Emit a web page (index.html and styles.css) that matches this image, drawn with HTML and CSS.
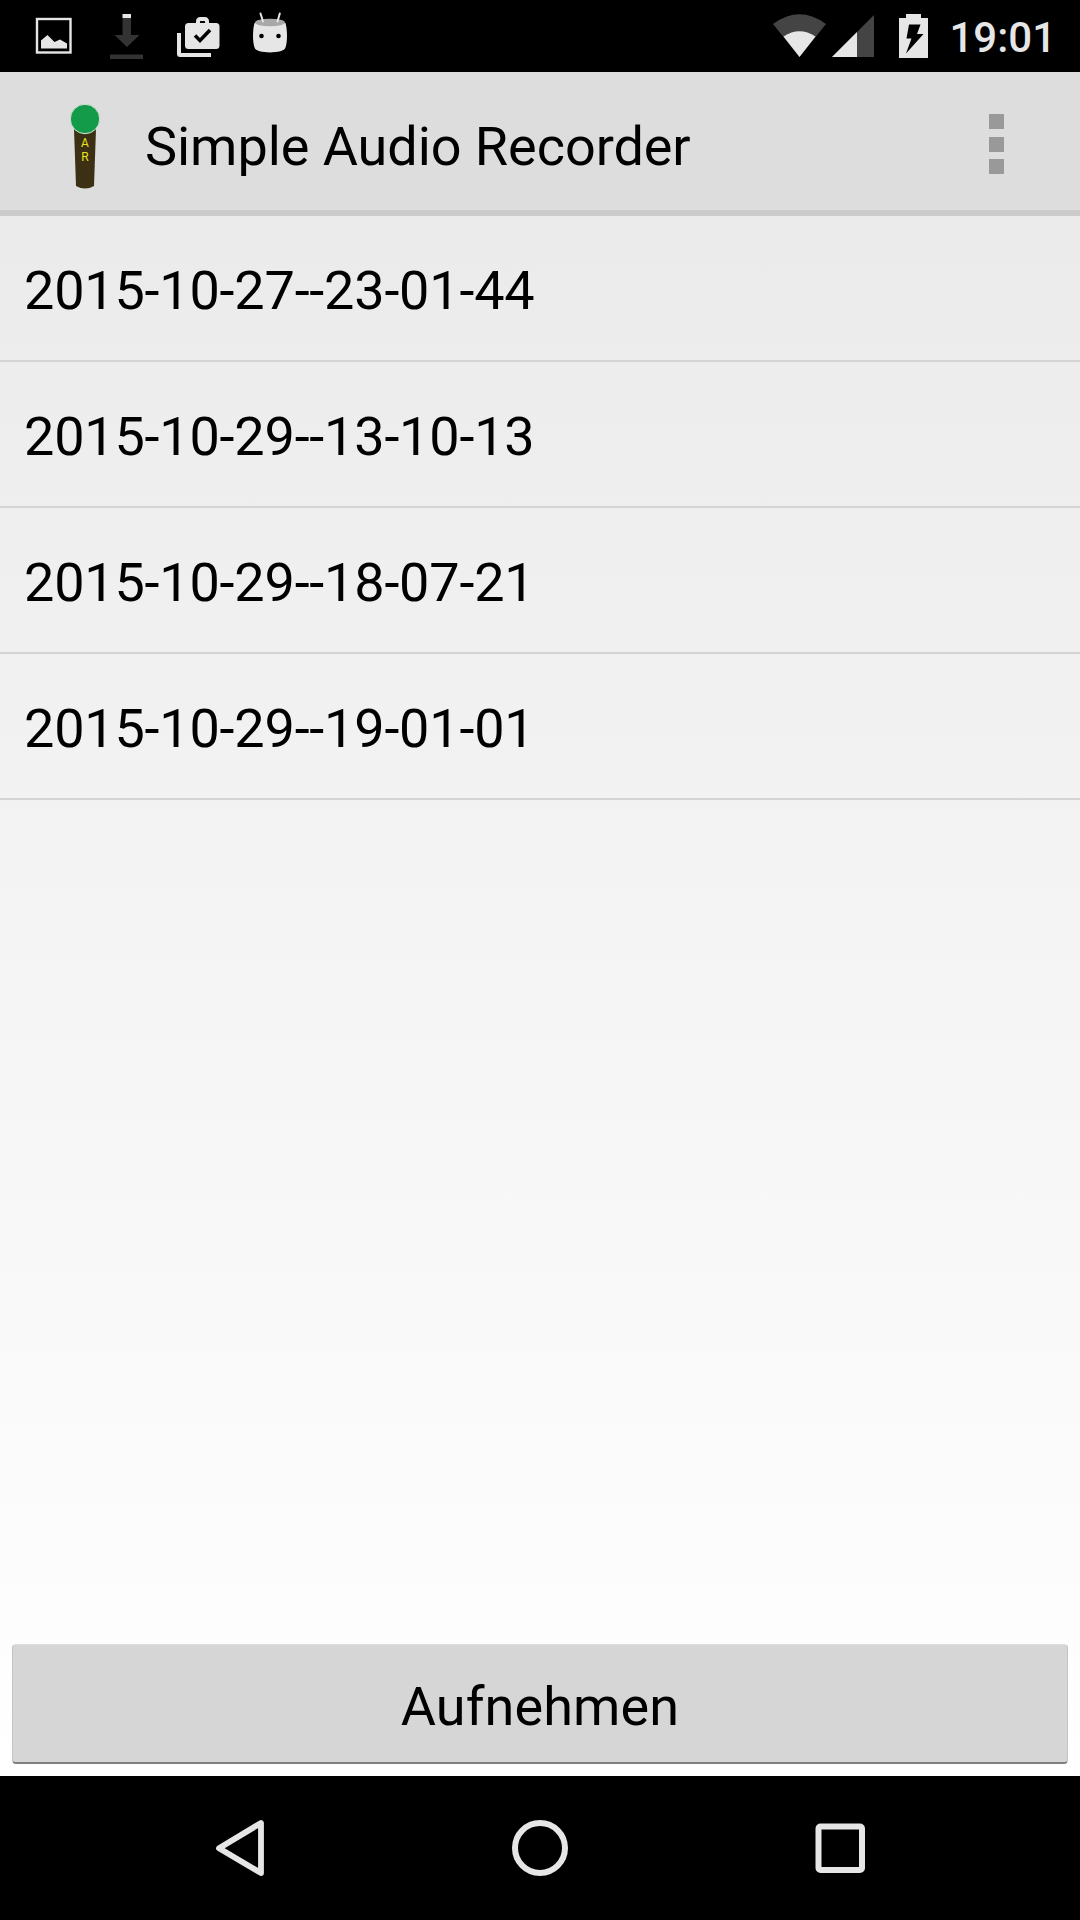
FILE: index.html
```html
<!DOCTYPE html>
<html lang="de">

<head>
    <meta charset="UTF-8">
    <meta name="viewport" content="width=device-width, initial-scale=1.0">
    <title>Simple Audio Recorder</title>
    <link rel="stylesheet" href="styles.css">
</head>

<body>
    <div class="screen">
        <div class="status-bar">
            <div class="notifications">
                <!-- picture -->
                <svg width="72" height="72" viewBox="0 0 72 72">
                    <rect x="19" y="19" width="33.5" height="33.5" fill="none" stroke="#e6e6e6" stroke-width="2.4" />
                    <path d="M23 48.5V40.5L29.5 35L36.5 42L42 39.5L49 43.5V48.5Z" fill="#e6e6e6" />
                </svg>
                <!-- download -->
                <svg width="72" height="72" viewBox="0 0 72 72">
                    <path d="M32.5 18H41V35H49.5L37 47L24.5 35H32.5Z" fill="#333" />
                    <rect x="32.5" y="14" width="8.5" height="4" fill="#e6e6e6" />
                    <rect x="20" y="54.5" width="33" height="4.5" fill="#333" />
                </svg>
                <!-- briefcase -->
                <svg width="72" height="72" viewBox="0 0 72 72">
                    <path d="M15 33H19V53H49V57H18Q15 57 15 54Z" fill="#e6e6e6" />
                    <path d="M36 24V21.5Q36 19 38.5 19H42.5Q45 19 45 21.5V24" fill="none" stroke="#e6e6e6" stroke-width="4" />
                    <rect x="23" y="23" width="34.5" height="26" rx="3.5" fill="#e6e6e6" />
                    <path d="M33 35.5L38 40.5L48 30" fill="none" stroke="#000" stroke-width="3.5" />
                </svg>
                <!-- android -->
                <svg width="72" height="72" viewBox="0 0 72 72">
                    <path d="M20.5 23C18.5 30 18.5 42 20.5 47.5C22 54 50 54 51.5 47.5C53.5 42 53.5 30 51.5 23Z" fill="#e6e6e6" />
                    <ellipse cx="36" cy="22.5" rx="15" ry="3.8" fill="#a8a8a8" />
                    <path d="M26.5 13.5L29 21.5M45.8 13.5L43.5 21.5" stroke="#e6e6e6" stroke-width="2" stroke-linecap="round" />
                    <circle cx="27.5" cy="36" r="2.3" />
                    <circle cx="44.5" cy="36" r="2.3" />
                </svg>
            </div>
            <div class="system-icons">
                <svg width="60" height="72" viewBox="0 0 60 72">
                    <path d="M31.5 57L5 24Q31.5 4.5 58 24Z" fill="#444" />
                    <path d="M31.5 57L15.5 36.5Q31.5 26 47.5 36.5Z" fill="#e6e6e6" />
                </svg>
                <svg width="54" height="72" viewBox="0 0 54 72">
                    <path d="M46 15V57H4Z" fill="#444" />
                    <path d="M29 32V57H4Z" fill="#e6e6e6" />
                </svg>
                <svg width="60" height="72" viewBox="0 0 60 72">
                    <path d="M17 18H24V14H39V18H46V58H17Z" fill="#e6e6e6" />
                    <path d="M27 24.5H38.5L35 34H41.5L24 53.5L29.5 38.5H24.5Z" />
                </svg>
                <span class="clock">19:01</span>
            </div>
        </div>

        <div class="action-bar">
            <!-- microphone launcher icon -->
            <svg width="96" height="96" viewBox="0 0 96 96">
                <path d="M37 33H59L57 90Q48 95 39 90Z" fill="#3b3013" />
                <circle cx="48" cy="23" r="14.7" fill="#149b49" stroke="#d5e3d9" stroke-width="1" />
                <text x="48" y="51" class="app-icon-text">A</text>
                <text x="48" y="65" class="app-icon-text">R</text>
            </svg>
            <h1>Simple Audio Recorder</h1>
            <div class="overflow">
                <span></span>
                <span></span>
                <span></span>
            </div>
        </div>

        <ul class="recordings">
            <li>2015-10-27--23-01-44</li>
            <li>2015-10-29--13-10-13</li>
            <li>2015-10-29--18-07-21</li>
            <li>2015-10-29--19-01-01</li>
        </ul>

        <button class="record">Aufnehmen</button>

        <div class="nav-bar">
            <svg width="72" height="72" viewBox="0 0 72 72">
                <path d="M57 11V61L15 36.2Z" fill="none" stroke="#e6e6e6" stroke-width="5.8" stroke-linejoin="round" />
            </svg>
            <svg width="72" height="72" viewBox="0 0 72 72">
                <circle cx="36" cy="36" r="25" fill="none" stroke="#e6e6e6" stroke-width="6" />
            </svg>
            <svg width="72" height="72" viewBox="0 0 72 72">
                <rect x="14.5" y="14.5" width="43.5" height="43.5" rx="2" fill="none" stroke="#e6e6e6" stroke-width="6" />
            </svg>
        </div>
    </div>
</body>

</html>
```
FILE: styles.css
```css
* {
    box-sizing: border-box;
}

body {
    font-family: Roboto, sans-serif;
    background-color: #000000;
    color: #000000;
    margin: 0;
    padding: 0;
}

svg {
    display: block;
    flex: none;
}

.screen {
    display: flex;
    flex-direction: column;
    width: 1080px;
    height: 1920px;
    background: linear-gradient(#e8e8e8, #ffffff 1776px);
}

.status-bar {
    display: flex;
    justify-content: space-between;
    height: 72px;
    padding: 0 24px 0 18px;
    background-color: #000000;
}

.notifications,
.system-icons {
    display: flex;
}

.clock {
    margin-left: 7px;
    font-size: 42px;
    font-weight: 500;
    line-height: 76px;
    color: #e6e6e6;
}

.action-bar {
    display: flex;
    align-items: center;
    height: 144px;
    padding: 6px 76px 0 37px;
    background-color: #dddddd;
    border-bottom: 6px solid #cbcbcb;
}

.app-icon-text {
    font-size: 12px;
    fill: #e8e020;
    text-anchor: middle;
}

h1 {
    flex: 1;
    margin: 0 0 0 12px;
    padding-top: 5px;
    font-size: 54px;
    font-weight: 400;
    line-height: 64px;
    letter-spacing: -0.05px;
}

.overflow {
    display: flex;
    flex-direction: column;
    gap: 7.5px;
}

.overflow span {
    width: 15px;
    height: 15px;
    background-color: #999999;
}

.recordings {
    flex: 1;
    margin: 0;
    padding: 0;
    list-style: none;
}

.recordings li {
    height: 146px;
    padding: 0 24px;
    border-bottom: 2px solid #d4d4d4;
    font-size: 54px;
    line-height: 150px;
    letter-spacing: -0.2px;
}

.record {
    height: 120px;
    margin: 0 12px 12px;
    padding: 6px 0 0;
    border: 1px solid #c4c4c4;
    border-top-color: #dddddd;
    border-bottom: 2px solid #808080;
    border-radius: 4px;
    background-color: #d6d6d6;
    color: #000000;
    font-family: inherit;
    font-size: 54px;
    letter-spacing: 0.1px;
}

.nav-bar {
    display: flex;
    justify-content: center;
    align-items: center;
    gap: 228px;
    height: 144px;
    background-color: #000000;
}
```
